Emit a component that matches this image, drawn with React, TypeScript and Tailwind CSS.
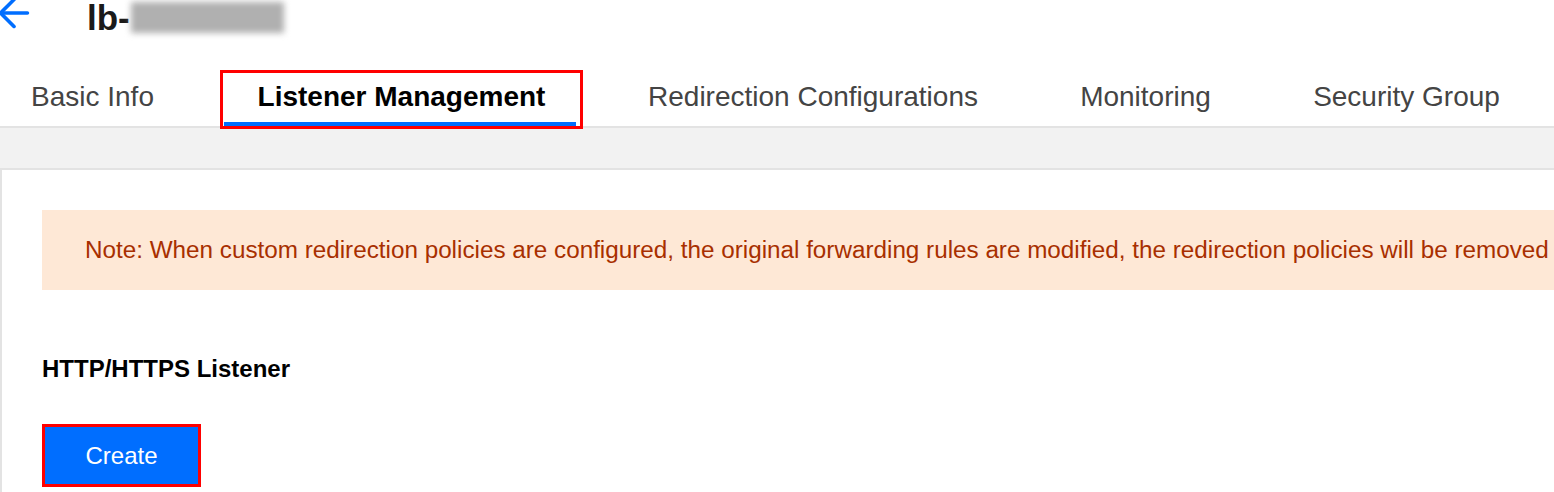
import { ArrowLeft } from 'lucide-react'

const tabs = [
  { label: 'Basic Info', cls: 'w-[185px]' },
  { label: 'Listener Management', cls: 'ml-[38px] w-[357px]', active: true },
  { label: 'Redirection Configurations', cls: 'ml-[36px] w-[394px]' },
  { label: 'Monitoring', cls: 'ml-[39px] w-[193px]' },
  { label: 'Security Group', cls: 'ml-[40px] w-[249px]' },
]

export default function App() {
  return (
    <div className="h-[492px] w-[1554px] overflow-hidden bg-white font-['Liberation_Sans',Arial,sans-serif]">
      {/* Title row */}
      <div className="relative flex h-[60px] items-start">
        <ArrowLeft size={46} strokeWidth={1.9} className="-mt-[10px] -ml-[9px] shrink-0 text-[#006eff]" />
        <h1 className="ml-[50px] text-[35px] font-bold leading-[35px] text-[#1a1a1a]">lb-</h1>
        <div className="absolute left-[131px] top-[2px] h-[31px] w-[153px] bg-[#b0b0b0] blur-[3px]" />
      </div>

      {/* Tabs */}
      <div className="flex h-[68px] border-b-2 border-[#e3e3e3] pt-[13px]">
        {tabs.map((t) => (
          <div key={t.label} className={`relative flex h-[53px] shrink-0 justify-center pt-[10px] ${t.cls}`}>
            <span
              className={`block whitespace-nowrap text-[28px] leading-[28px] ${
                t.active ? 'font-bold text-black' : 'text-[#444]'
              }`}
            >
              {t.label}
            </span>
            {t.active && (
              <>
                <div className="absolute bottom-0 left-[1px] right-[4px] h-[4px] bg-[#006eff]" />
                <div className="absolute -inset-[3px] border-[3px] border-[#ff0000]" />
              </>
            )}
          </div>
        ))}
      </div>

      {/* Gray band */}
      <div className="h-[42px] border-b-2 border-[#e3e3e3] bg-[#f2f2f2]" />

      {/* Content panel */}
      <div className="h-[330px] border-l-2 border-[#e3e3e3] pl-[40px] pt-[40px]">
        <div className="flex h-[80px] items-center bg-[#fee8d6] pl-[43px]">
          <p className="whitespace-nowrap text-[24.25px] leading-[24px] text-[#a82f00]">
            Note: When custom redirection policies are configured, the original forwarding rules are modified, the redirection policies will be removed
          </p>
        </div>

        <h2 className="mt-[67px] text-[24px] font-bold leading-[24px] text-black">HTTP/HTTPS Listener</h2>

        <button className="mt-[43px] flex h-[63px] w-[159px] items-center justify-center border-[3px] border-[#ff0000] bg-[#006eff] text-[24px] leading-[24px] text-white">
          Create
        </button>
      </div>
    </div>
  )
}
